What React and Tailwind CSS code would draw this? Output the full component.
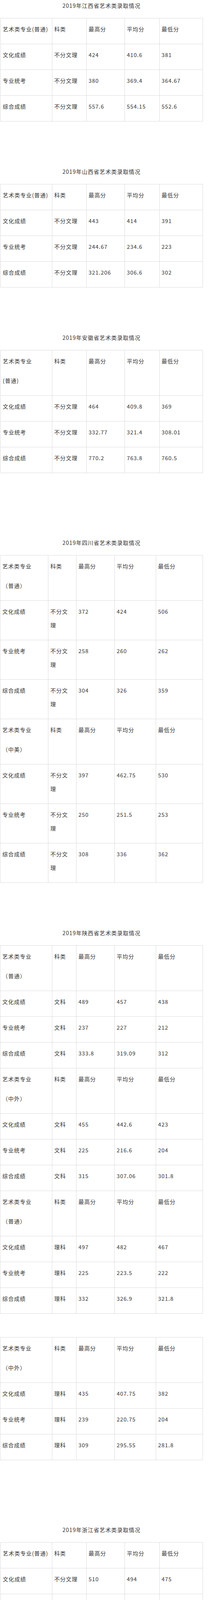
import React from 'react';

// column widths for the three table shapes seen on the page
const layouts = {
  wide: 'ml-[1px] w-[519px] grid-cols-[132px_88px_98px_89px_111px]',
  sc: 'w-[520px] grid-cols-[123px_72px_98px_106px_120px]',
  sx: 'w-[520px] grid-cols-[133px_62px_98px_106px_120px]',
};

const rowsOf = (kind, a, b, c) => [
  ['文化成绩', kind, ...a],
  ['专业统考', kind, ...b],
  ['综合成绩', kind, ...c],
];

const sections = [
  {
    title: '2019年江西省艺术类录取情况', layout: 'wide', gap: 'mt-0',
    tables: [[{ head: ['艺术类专业(普通)'], rows: rowsOf('不分文理', ['424', '410.6', '381'], ['380', '369.4', '364.67'], ['557.6', '554.15', '552.6']) }]],
  },
  {
    title: '2019年山西省艺术类录取情况', layout: 'wide', gap: 'mt-[114px]',
    tables: [[{ head: ['艺术类专业(普通)'], rows: rowsOf('不分文理', ['443', '414', '391'], ['244.67', '234.6', '223'], ['321.206', '306.6', '302']) }]],
  },
  {
    title: '2019年安徽省艺术类录取情况', layout: 'wide', gap: 'mt-[114px]',
    tables: [[{ head: ['艺术类专业', '(普通)'], rows: rowsOf('不分文理', ['464', '409.8', '369'], ['332.77', '321.4', '308.01'], ['770.2', '763.8', '760.5']) }]],
  },
  {
    title: '2019年四川省艺术类录取情况', layout: 'sc', gap: 'mt-[164px]',
    tables: [[
      { head: ['艺术类专业', '（普通）'], rows: rowsOf('不分文|理', ['372', '424', '506'], ['258', '260', '262'], ['304', '326', '359']) },
      { head: ['艺术类专业', '（中美）'], rows: rowsOf('不分文|理', ['397', '462.75', '530'], ['250', '251.5', '253'], ['308', '336', '362']) },
    ]],
  },
  {
    title: '2019年陕西省艺术类录取情况', layout: 'sx', gap: 'mt-[114px]',
    tables: [
      [
        { head: ['艺术类专业', '（普通）'], rows: rowsOf('文科', ['489', '457', '438'], ['237', '227', '212'], ['333.8', '319.09', '312']) },
        { head: ['艺术类专业', '（中外）'], rows: rowsOf('文科', ['455', '442.6', '423'], ['225', '216.6', '204'], ['315', '307.06', '301.8']) },
        { head: ['艺术类专业', '（普通）'], rows: rowsOf('理科', ['497', '482', '467'], ['225', '223.5', '222'], ['332', '326.9', '321.8']) },
      ],
      [
        { head: ['艺术类专业', '（中外）'], rows: rowsOf('理科', ['435', '407.75', '382'], ['239', '220.75', '204'], ['309', '295.55', '281.8']) },
      ],
    ],
  },
  {
    title: '2019年浙江省艺术类录取情况', layout: 'wide', gap: 'mt-[164px]',
    tables: [[{ head: ['艺术类专业(普通)'], rows: rowsOf('不分文理', ['510', '494', '475'], ['87', '85.75', '83'], ['577', '568.5', '564']) }]],
  },
  {
    title: '2019年广东省艺术类录取情况', layout: 'wide', gap: 'mt-[114px]',
    tables: [[{ head: ['艺术类专业(普通)'], rows: rowsOf('不分文理', ['476', '431.6', '353'], ['250', '230.18', '220'], ['521', '517.9', '516']) }]],
  },
  {
    title: '2019年福建省艺术类录取情况', layout: 'sc', gap: 'mt-[114px]',
    tables: [[
      { head: ['艺术类专业', '（普通）'], rows: rowsOf('文科', ['508', '495', '481'], ['230', '220.75', '212'], ['331.2', '330.45', '329.8']) },
      { head: ['艺术类专业', '（中美）'], rows: rowsOf('理科', ['443', '427', '405'], ['233', '225', '215'], ['311', '305.8', '301.8']) },
    ]],
  },
];

const cell = 'border-r border-b border-[#dcdcdc] pt-[10px] px-[5px] leading-[35px] whitespace-nowrap';

// a "|" in a value marks where the original cell wraps onto a second line
const Cell = ({ value, h }) => (
  <div className={`${cell} ${h}`}>
    {value.split('|').map((p, i) => <div key={i}>{p}</div>)}
  </div>
);

const ScoreTable = ({ groups, layout }) => (
  <div className={`grid border-l border-t border-[#dcdcdc] ${layouts[layout]}`}>
    {groups.map((g, gi) => {
      const headH = g.head[1] ? 'h-[116px]' : 'h-[66px]';
      return (
        <React.Fragment key={gi}>
          <div className={`${cell} ${headH}`}>
            {g.head[0]}
            {g.head[1] && <div className="mt-[15px]">{g.head[1]}</div>}
          </div>
          {['科类', '最高分', '平均分', '最低分'].map((t) => (
            <div key={t} className={`${cell} ${headH}`}>{t}</div>
          ))}
          {g.rows.map((r, ri) => {
            const rowH = r.some((v) => v.includes('|')) ? 'h-[101px]' : 'h-[66px]';
            return r.map((v, ci) => <Cell key={`${ri}-${ci}`} value={v} h={rowH} />);
          })}
        </React.Fragment>
      );
    })}
  </div>
);

export default function App() {
  return (
    <div className="w-[556px] bg-white text-[#333] text-[14px] tracking-[1px] font-['Noto_Sans_CJK_SC','Noto_Sans',sans-serif]">
      {sections.map((s, si) => (
        <section key={si} className={s.gap}>
          <div className="w-[520px] h-[28px] leading-[28px] mb-[18px] text-center">{s.title}</div>
          {s.tables.map((t, ti) => (
            <div key={ti} className={ti > 0 ? 'mt-[60px]' : ''}>
              <ScoreTable groups={t} layout={s.layout} />
            </div>
          ))}
        </section>
      ))}
    </div>
  );
}
